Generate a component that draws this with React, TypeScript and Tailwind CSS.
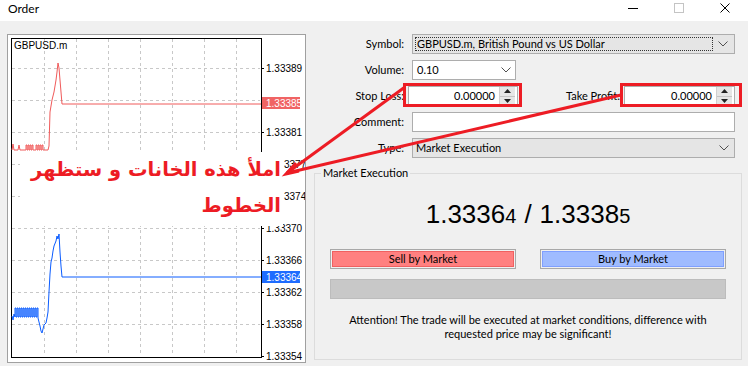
import React from 'react';

const gridX = [44, 76, 108, 140, 172, 204, 236];
const topRows = [
    { y: 68, v: '1.33389' },
    { y: 100, v: '' },
    { y: 132, v: '1.33381' },
    { y: 164, v: '3377' },
    { y: 196, v: '3374' },
];
const bottomRows = [
    { y: 228, v: '1.33370' },
    { y: 260, v: '1.33366' },
    { y: 292, v: '1.33362' },
    { y: 324, v: '1.33358' },
    { y: 356, v: '1.33354' },
];

// little comb of ticks the feed draws before the jump
const comb = (x0: number, x1: number, yTop: number, yBot: number) => {
    const pts: string[] = [];
    for (let x = x0; x <= x1; x += 2) {
        pts.push(`${x},${yBot}`, `${x},${yTop}`, `${x + 1},${yTop}`, `${x + 1},${yBot}`);
    }
    return pts.join(' ');
};

const askLine =
    '12,150 13,144 14,150 18,150 19,145 20,150 ' +
    comb(26, 32, 145, 150) + ' 34,150 ' + comb(36, 42, 145, 150) +
    ' 48,150 49,146 50,112 52,100 54,92 55,86 56,80 57,72 58,63 59,68 60,80 61,92 62,104 261,104';

const bidLine =
    '12,316 13,320 14,314 ' + comb(15, 37, 308, 317) +
    ' 38,318 39,322 40,326 41,331 42,333 43,329 44,325 46,323 47,318 48,312 49,292 50,274 51,262 52,258 53,251 54,246 56,241 57,236 58,239 59,234 60,252 61,266 62,277 261,277';

const PriceChart = () => (
    <svg width="299" height="329" viewBox="7 34 299 329" className="block">
        <rect x="7" y="34" width="299" height="329" fill="#ffffff" />
        {/* grid */}
        <g stroke="#c8c8c8" strokeDasharray="3 3" strokeWidth="1">
            {gridX.map(x => (
                <line key={'t' + x} x1={x + 0.5} y1={39} x2={x + 0.5} y2={212} />
            ))}
            {gridX.map(x => (
                <line key={'b' + x} x1={x + 0.5} y1={224} x2={x + 0.5} y2={356} />
            ))}
            {[...topRows, ...bottomRows.slice(0, 4)].map(r => (
                <line key={'h' + r.y} x1={12} y1={r.y + 0.5} x2={260} y2={r.y + 0.5} />
            ))}
        </g>
        {/* axis labels, the ones behind the note only show their tail */}
        <g fontFamily="'Liberation Sans', Arial, sans-serif" fontSize="10" fill="#000">
            {[...topRows, ...bottomRows].map(r => (
                <g key={'l' + r.y}>
                    <line x1={261} y1={r.y + 0.5} x2={264} y2={r.y + 0.5} stroke="#000" />
                    {r.v && (
                        <text x={r.v.length < 7 ? 284 : 266} y={r.y + 4}>{r.v}</text>
                    )}
                </g>
            ))}
        </g>
        <rect x="262" y="212" width="44" height="12" fill="#ffffff" />
        {/* frames */}
        <g stroke="#000" strokeWidth="1" fill="none">
            <line x1="11.5" y1="38" x2="11.5" y2="357.5" />
            <line x1="11" y1="38.5" x2="262" y2="38.5" />
            <line x1="261.5" y1="38" x2="261.5" y2="212" />
            <line x1="261.5" y1="224" x2="261.5" y2="357.5" />
            <line x1="11" y1="357.5" x2="262" y2="357.5" />
        </g>
        <text x="14" y="49" fontFamily="'Liberation Sans', Arial, sans-serif" fontSize="10" fill="#000">GBPUSD.m</text>
        {/* series */}
        <polyline points={askLine} fill="none" stroke="#f05a5a" strokeWidth="1" />
        <polyline points={bidLine} fill="none" stroke="#0a5cff" strokeWidth="1" />
        <rect x="262" y="97" width="38" height="12" fill="#f06464" />
        <text x="266" y="107" fontFamily="'Liberation Sans', Arial, sans-serif" fontSize="10" fill="#fff">1.33385</text>
        <rect x="262" y="271" width="38" height="12" fill="#1e6cff" />
        <text x="266" y="281" fontFamily="'Liberation Sans', Arial, sans-serif" fontSize="10" fill="#fff">1.33364</text>
        <rect x="7.5" y="34.5" width="298" height="328" fill="none" stroke="#a0a0a0" />
    </svg>
);

const Chevron = () => (
    <svg width="10" height="6" viewBox="0 0 10 6">
        <polyline points="0.5,0.5 5,5 9.5,0.5" fill="none" stroke="#505050" strokeWidth="1" />
    </svg>
);

const Spinner = () => (
    <div className="flex flex-col w-[16px] h-full border-l border-[#d0d0d0]">
        <div className="flex-1 bg-[#e6e6e6] border-b border-[#c4c4c4] flex items-center justify-center">
            <svg width="7" height="4"><polygon points="3.5,0 7,4 0,4" fill="#222" /></svg>
        </div>
        <div className="flex-1 bg-[#e6e6e6] flex items-center justify-center">
            <svg width="7" height="4"><polygon points="0,0 7,0 3.5,4" fill="#222" /></svg>
        </div>
    </div>
);

const Label = ({ children }: { children: React.ReactNode }) => (
    <span className="w-[90px] shrink-0 text-right">{children}</span>
);

const Overlay = () => (
    <svg width="748" height="366" className="absolute left-0 top-0 pointer-events-none">
        <g stroke="#ed1c24" fill="none">
            <rect x="404.5" y="84.5" width="116" height="21" strokeWidth="3" />
            <rect x="621.5" y="84.5" width="119" height="21" strokeWidth="3" />
            <line x1="287" y1="173" x2="405" y2="87" strokeWidth="3" />
            <line x1="287" y1="173" x2="621" y2="95" strokeWidth="3" />
            <polyline points="296,163 286,174 299,171" strokeWidth="3" />
        </g>
    </svg>
);

export default function App() {
    return (
        <div className="relative w-[748px] h-[366px] overflow-hidden bg-[#f0f0f0] text-[11px] text-black font-[Lato,'Noto_Sans',sans-serif]">
            <div className="h-[21px] bg-white flex items-center justify-between pl-[8px]">
                <span className="text-[12px] leading-none -mt-[3px]">Order</span>
                <div className="flex items-start h-full">
                    <div className="w-[46px] h-full flex justify-center pt-[8px]">
                        <div className="w-[10px] h-px bg-black" />
                    </div>
                    <div className="w-[46px] h-full flex justify-center pt-[3px]">
                        <div className="w-[10px] h-[10px] border border-[#c4c4c4]" />
                    </div>
                    <div className="w-[46px] h-full flex justify-center pt-[3px]">
                        <svg width="10" height="10" viewBox="0 0 10 10">
                            <path d="M0.5 0.5 L9.5 9.5 M9.5 0.5 L0.5 9.5" stroke="#000" strokeWidth="1" />
                        </svg>
                    </div>
                </div>
            </div>

            <div className="flex pt-[13px]">
                <div className="relative ml-[7px] w-[299px] h-[329px]">
                    <PriceChart />
                    <div
                        dir="rtl"
                        className="absolute left-[13px] top-[118px] w-[263px] h-[74px] bg-white pr-[2px] text-right whitespace-nowrap text-[#ed1c24] font-bold text-[19.5px] leading-[36px] font-['DejaVu_Sans',sans-serif]"
                    >
                        <div>املأ هذه الخانات و ستظهر</div>
                        <div>الخطوط</div>
                    </div>
                </div>

                <div className="ml-[8px] w-[428px] flex flex-col">
                    <div className="w-[421px] flex flex-col gap-[6px]">
                        <div className="flex items-center h-[20px]">
                            <Label>Symbol:</Label>
                            <div className="ml-[8px] flex-1 h-[20px] bg-[#e5e5e5] border border-[#adadad] flex items-center p-[2px]">
                                <div className="flex-1 h-full border border-dotted border-[#333] flex items-center pl-[1px]">
                                    GBPUSD.m, British Pound vs US Dollar
                                </div>
                                <div className="w-[19px] flex justify-center"><Chevron /></div>
                            </div>
                        </div>
                        <div className="flex items-center h-[20px]">
                            <Label>Volume:</Label>
                            <div className="ml-[8px] w-[104px] h-[20px] bg-white border border-[#adadad] flex items-center pl-[4px]">
                                <span className="flex-1">0.10</span>
                                <div className="w-[18px] flex justify-center"><Chevron /></div>
                            </div>
                        </div>
                        <div className="flex items-center h-[20px]">
                            <Label>Stop Loss:</Label>
                            <div className="ml-[4px] w-[110px] h-[20px] bg-white border border-[#adadad] flex pr-[2px]">
                                <span className="flex-1 text-right pr-[4px] leading-[18px]">0.00000</span>
                                <Spinner />
                            </div>
                            <span className="flex-1 text-right">Take Profit:</span>
                            <div className="ml-[4px] w-[111px] h-[20px] bg-white border border-[#adadad] flex pr-[2px]">
                                <span className="flex-1 text-right pr-[4px] leading-[18px]">0.00000</span>
                                <Spinner />
                            </div>
                        </div>
                        <div className="flex items-center h-[20px]">
                            <Label>Comment:</Label>
                            <div className="ml-[8px] flex-1 h-[20px] bg-white border border-[#adadad]" />
                        </div>
                        <div className="flex items-center h-[20px]">
                            <Label>Type:</Label>
                            <div className="ml-[8px] flex-1 h-[20px] bg-[#e5e5e5] border border-[#adadad] flex items-center pl-[3px]">
                                <span className="flex-1">Market Execution</span>
                                <div className="w-[21px] flex justify-center"><Chevron /></div>
                            </div>
                        </div>
                    </div>

                    <div className="relative mt-[15px] h-[187px] border border-[#dcdcdc] flex flex-col items-center px-[15px]">
                        <span className="absolute left-[6px] -top-[9px] bg-[#f0f0f0] px-[2px] leading-[16px]">Market Execution</span>
                        <div className="mt-[27px] h-[30px] flex items-baseline font-['Liberation_Sans',Arial,sans-serif] text-[26px] leading-none">
                            <span>1.3336</span>
                            <span className="text-[20px]">4</span>
                            <span className="mx-[8px]">/</span>
                            <span>1.3338</span>
                            <span className="text-[20px]">5</span>
                        </div>
                        <div className="mt-[18px] w-full flex justify-between">
                            <div className="w-[186px] h-[20px] border border-[#a8a8a8] p-[1px]">
                                <div className="h-full bg-[#ff8080] border border-[#f06060] flex items-center justify-center">Sell by Market</div>
                            </div>
                            <div className="w-[186px] h-[20px] border border-[#a8a8a8] p-[1px]">
                                <div className="h-full bg-[#9fbbff] border border-[#7f9fff] flex items-center justify-center">Buy by Market</div>
                            </div>
                        </div>
                        <div className="mt-[10px] w-full h-[20px] bg-[#c8c8c8] border border-[#bcbcbc]" />
                        <div className="mt-[14px] text-center leading-[14px]">
                            <div>Attention! The trade will be executed at market conditions, difference with</div>
                            <div>requested price may be significant!</div>
                        </div>
                    </div>
                </div>
            </div>

            <Overlay />
        </div>
    );
}
